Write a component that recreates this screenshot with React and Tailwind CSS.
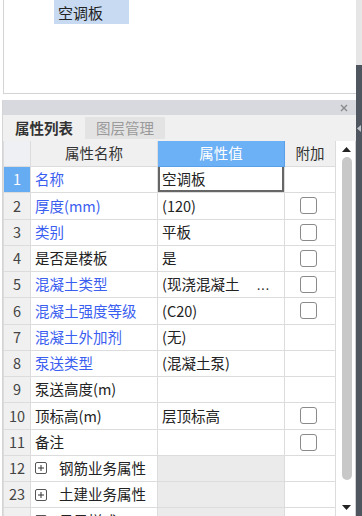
import React from "react";

const rows = [
  { n: "1", name: "名称", blue: true, value: "空调板", editing: true },
  { n: "2", name: "厚度(mm)", blue: true, value: "(120)", check: true },
  { n: "3", name: "类别", blue: true, value: "平板", check: true },
  { n: "4", name: "是否是楼板", value: "是", check: true },
  { n: "5", name: "混凝土类型", blue: true, value: "(现浇混凝土", more: true, check: true },
  { n: "6", name: "混凝土强度等级", blue: true, value: "(C20)", check: true },
  { n: "7", name: "混凝土外加剂", blue: true, value: "(无)" },
  { n: "8", name: "泵送类型", blue: true, value: "(混凝土泵)" },
  { n: "9", name: "泵送高度(m)", value: "" },
  { n: "10", name: "顶标高(m)", value: "层顶标高", check: true },
  { n: "11", name: "备注", value: "", check: true },
  { n: "12", name: "钢筋业务属性", group: true },
  { n: "23", name: "土建业务属性", group: true },
  { n: "35", name: "显示样式", group: true },
];

function PlusBox() {
  return (
    <span className="w-[12px] h-[12px] border border-[#555] rounded-[2px] flex items-center justify-center mr-[12px] shrink-0">
      <svg width="8" height="8" viewBox="0 0 8 8">
        <path d="M4 1v6M1 4h6" stroke="#333" strokeWidth="1" />
      </svg>
    </span>
  );
}

function Row({ row }) {
  const selected = row.editing;
  return (
    <div className="flex h-[26.25px] shrink-0">
      <div
        className={`w-[27px] flex items-center justify-center border-r border-b border-[#dcdcdc] ${
          selected ? "bg-[#66acf2] text-white" : "bg-[#f0f0f0] text-[#444]"
        }`}
      >
        {row.n}
      </div>
      <div
        className={`w-[127px] flex items-center pl-[4px] border-r border-b border-[#dcdcdc] bg-white whitespace-nowrap overflow-hidden ${
          row.blue ? "text-[#3a5ef0]" : "text-[#222]"
        }`}
      >
        {row.group && <PlusBox />}
        {row.name}
      </div>
      <div
        className={`w-[127px] flex items-center pl-[4px] border-r border-b border-[#dcdcdc] text-[#222] whitespace-nowrap overflow-hidden ${
          row.group ? "bg-[#ebebeb]" : "bg-white"
        } ${selected ? "shadow-[inset_2px_0_0_#666,inset_-2px_0_0_#666,inset_0_-2px_0_#666]" : ""}`}
      >
        <span className="flex-1">{row.value}</span>
        {row.more && <span className="pr-[14px] text-[12px] tracking-[1px]">...</span>}
      </div>
      <div className="w-[51px] flex items-center justify-center pr-[4px] border-r border-b border-[#dcdcdc] bg-white">
        {row.check && (
          <span className="w-[17px] h-[17px] border border-[#8a8a8a] rounded-[3px] bg-white" />
        )}
      </div>
    </div>
  );
}

export default function App() {
  return (
    <div className="w-[362px] h-[516px] overflow-hidden bg-white flex font-['Noto_Sans_CJK_SC',sans-serif] text-[14.5px] leading-none">
      {/* main column */}
      <div className="w-[356px] flex flex-col">
        {/* tree panel */}
        <div className="ml-[3px] h-[94px] border-l border-b border-[#d4d4d4] shrink-0">
          <div className="ml-[50px] w-[75px] h-[24px] bg-[#c8daf2] flex items-center pl-[4px] text-[15px] text-[#222]">
            空调板
          </div>
        </div>
        <div className="h-[6px] shrink-0" />

        {/* property panel */}
        <div className="ml-[2px] flex-1 flex flex-col border-l border-[#d4d4d4] min-h-0">
          <div className="h-[15px] bg-[#d7d9df] flex items-center justify-end pr-[8px] shrink-0">
            <svg width="8" height="8" viewBox="0 0 8 8">
              <path d="M1 1l6 6M7 1l-6 6" stroke="#8a8a8a" strokeWidth="1.4" />
            </svg>
          </div>
          <div className="h-[26px] bg-[#f0f0f0] flex items-stretch shrink-0">
            <div className="w-[82px] flex items-center justify-center font-semibold text-[#333]">属性列表</div>
            <div className="w-[80px] my-[2px] bg-[#e3e3e3] flex items-center justify-center text-[#9a9a9a]">图层管理</div>
          </div>

          <div className="flex flex-1 min-h-0">
            <div className="w-[333px] flex flex-col border-l border-[#dcdcdc] overflow-hidden">
              <div className="flex h-[26px] shrink-0">
                <div className="w-[27px] bg-[#eef0f4] border-r border-b border-[#dcdcdc]" />
                <div className="w-[127px] bg-[#f0f0f0] border-r border-b border-[#dcdcdc] flex items-center justify-center text-[#333]">
                  属性名称
                </div>
                <div className="w-[127px] bg-[#6cb0f5] border-r border-b border-[#5aa0e8] flex items-center justify-center text-white">
                  属性值
                </div>
                <div className="w-[51px] bg-[#f0f0f0] border-r border-b border-[#dcdcdc] flex items-center justify-center text-[#333]">
                  附加
                </div>
              </div>
              {rows.map((r) => (
                <Row key={r.n} row={r} />
              ))}
            </div>

            {/* scrollbar */}
            <div className="w-[20px] bg-white flex flex-col items-center pl-[2px] border-r border-[#cfcfcf]">
              <div className="h-[12px] flex items-center mt-[2px]">
                <svg width="9" height="5" viewBox="0 0 9 5">
                  <path d="M0 5L4.5 0 9 5z" fill="#222" />
                </svg>
              </div>
              <div className="w-[10px] h-[323px] mt-[2px] rounded-full bg-[#c8c8c8]" />
              <div className="flex-1" />
              <div className="h-[12px] flex items-center mb-[3px]">
                <svg width="9" height="5" viewBox="0 0 9 5">
                  <path d="M0 0L4.5 5 9 0z" fill="#222" />
                </svg>
              </div>
            </div>
          </div>
        </div>
      </div>

      {/* outer strip */}
      <div className="w-[6px] flex flex-col">
        <div className="h-[65px] bg-[#e6e6e6]" />
        <div className="flex-1 bg-[#4f5660] flex flex-col">
          <div className="h-[60px]" />
          <div className="pl-[1px]">
            <svg width="4" height="7" viewBox="0 0 4 7">
              <path d="M4 0L0 3.5 4 7z" fill="#bfc3c8" />
            </svg>
          </div>
        </div>
      </div>
    </div>
  );
}
